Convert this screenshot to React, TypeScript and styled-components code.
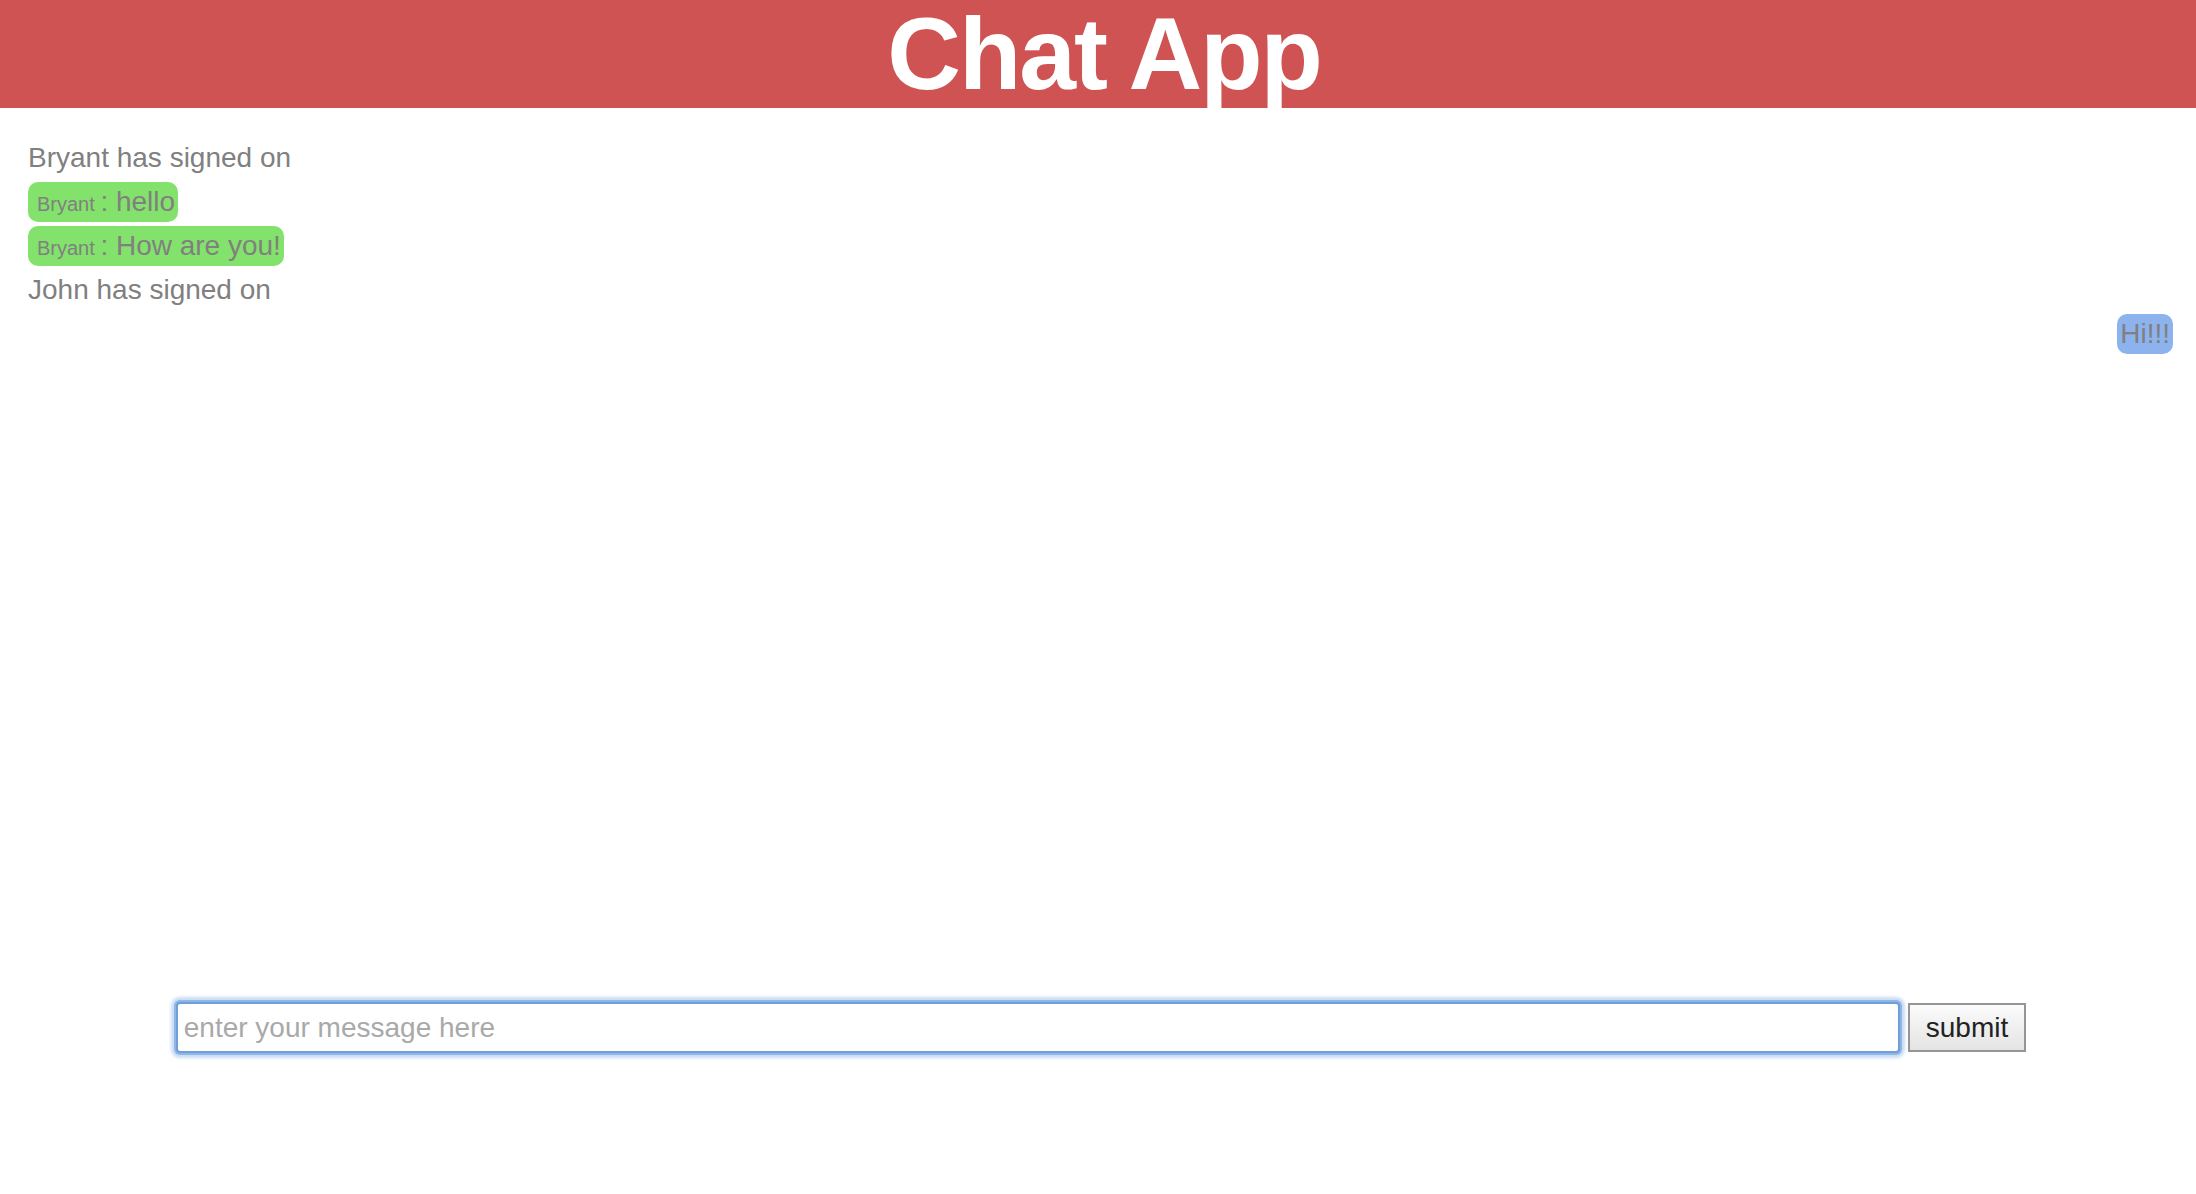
import React from "react";
import styled, { createGlobalStyle } from "styled-components";

const GlobalStyle = createGlobalStyle`
  html, body {
    margin: 0;
    padding: 0;
    background: #ffffff;
    font-family: "Liberation Sans", Arial, Helvetica, sans-serif;
  }
  * { box-sizing: border-box; }
`;

const Page = styled.div`
  display: flex;
  flex-direction: column;
  min-height: 100vh;
`;

const Header = styled.header`
  height: 108px;
  background: #cf5353;
  display: flex;
  justify-content: center;
`;

const Title = styled.h1`
  margin: 0;
  padding-left: 12px;
  color: #ffffff;
  font-size: 102px;
  font-weight: 700;
  line-height: 108px;
  letter-spacing: -2px;
  white-space: nowrap;
`;

const MessageList = styled.div`
  height: 894px;
  padding: 30px 23px 0 28px;
  display: flex;
  flex-direction: column;
  gap: 4px;
`;

const Row = styled.div<{ $mine?: boolean }>`
  display: flex;
  justify-content: ${(p) => (p.$mine ? "flex-end" : "flex-start")};
`;

const Notice = styled.div`
  color: #808080;
  font-size: 28px;
  line-height: 32px;
  height: 40px;
  padding: 4px 0;
`;

const Bubble = styled.div<{ $mine?: boolean }>`
  color: #808080;
  font-size: 28px;
  line-height: 32px;
  height: 40px;
  padding: ${(p) => (p.$mine ? "4px 3px" : "4px 3px 4px 9px")};
  border-radius: 10px;
  background: ${(p) => (p.$mine ? "#8db3ef" : "#83e26b")};
  white-space: nowrap;
`;

const Sender = styled.span`
  font-size: 20px;
  line-height: 20px;
`;

const Form = styled.form`
  display: flex;
  justify-content: center;
  align-items: center;
  gap: 8px;
  padding-left: 6px;
`;

const MessageInput = styled.input`
  width: 1724px;
  height: 51px;
  padding: 0 6px;
  font-family: "Liberation Sans", Arial, Helvetica, sans-serif;
  font-size: 28px;
  color: #333;
  border: 2px solid #6f9fd8;
  border-radius: 4px;
  box-shadow: 0 0 0 2px #8fb6e6, 0 0 3px 5px rgba(150, 188, 235, 0.5);
  outline: none;
  &::placeholder {
    color: #a9a9a9;
  }
`;

const SubmitButton = styled.button`
  height: 49px;
  padding: 0 16px;
  font-family: "Liberation Sans", Arial, Helvetica, sans-serif;
  font-size: 28px;
  color: #222;
  border: 2px solid #959595;
  border-radius: 0;
  background: linear-gradient(#fbfbfb, #e4e4e4);
`;

type Msg =
  | { kind: "notice"; text: string }
  | { kind: "chat"; sender?: string; text: string; mine?: boolean };

const messages: Msg[] = [
  { kind: "notice", text: "Bryant has signed on" },
  { kind: "chat", sender: "Bryant", text: ": hello" },
  { kind: "chat", sender: "Bryant", text: ": How are you!" },
  { kind: "notice", text: "John has signed on" },
  { kind: "chat", text: "Hi!!!", mine: true },
];

export default function App() {
  return (
    <>
      <GlobalStyle />
      <Page>
        <Header>
          <Title>Chat App</Title>
        </Header>
        <MessageList>
          {messages.map((m, i) =>
            m.kind === "notice" ? (
              <Row key={i}>
                <Notice>{m.text}</Notice>
              </Row>
            ) : (
              <Row key={i} $mine={m.mine}>
                <Bubble $mine={m.mine}>
                  {m.sender && <Sender>{m.sender} </Sender>}
                  {m.text}
                </Bubble>
              </Row>
            )
          )}
        </MessageList>
        <Form onSubmit={(e) => e.preventDefault()}>
          <MessageInput placeholder="enter your message here" autoFocus />
          <SubmitButton type="submit">submit</SubmitButton>
        </Form>
      </Page>
    </>
  );
}
